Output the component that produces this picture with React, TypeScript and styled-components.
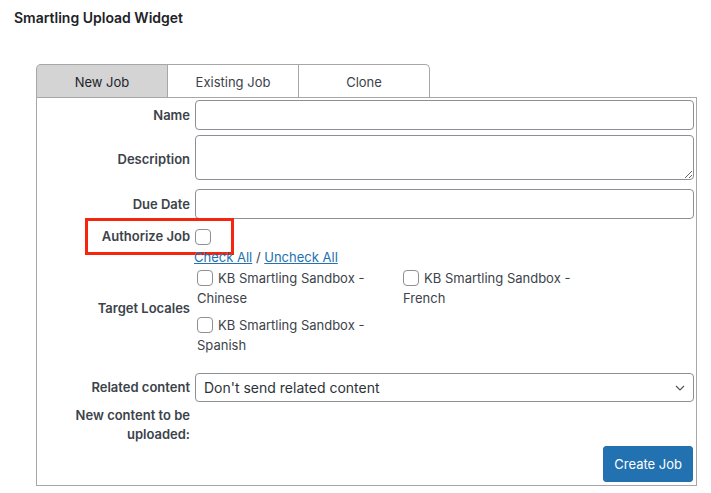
import styled, { createGlobalStyle } from "styled-components";

const GlobalStyle = createGlobalStyle`
   * { box-sizing: border-box; }
   body {
      margin: 0;
      background: #ffffff;
      font-family: Inter, Roboto, "Liberation Sans", sans-serif;
      color: #3c434a;
   }
`;

const locales = [
   "KB Smartling Sandbox - Chinese",
   "KB Smartling Sandbox - French",
   "KB Smartling Sandbox - Spanish",
];

const App = () => {
   return (
      <>
         <GlobalStyle />
         <Page>
            <Heading>Smartling Upload Widget</Heading>
            <Widget>
               <Tabs>
                  <Tab $active>New Job</Tab>
                  <Tab>Existing Job</Tab>
                  <Tab $last>Clone</Tab>
               </Tabs>
               <Panel>
                  <FormRow $top={2}>
                     <Label>Name</Label>
                     <TextInput type="text" />
                  </FormRow>
                  <FormRow $top={5}>
                     <Label $shift={2}>Description</Label>
                     <TextArea />
                  </FormRow>
                  <FormRow $top={9}>
                     <Label>Due Date</Label>
                     <TextInput type="text" />
                  </FormRow>
                  <FormRow $top={8}>
                     <Label>Authorize Job</Label>
                     <Box />
                     <Highlight />
                  </FormRow>
                  <FormRow $top={3}>
                     <span />
                     <Links>
                        <LinkText>Check All</LinkText> / <LinkText>Uncheck All</LinkText>
                     </Links>
                  </FormRow>
                  <FormRow $top={3}>
                     <Label $shift={-3}>Target Locales</Label>
                     <LocaleGrid>
                        {locales.map((name) => (
                           <Locale key={name}>
                              <Box $inline />
                              {name}
                           </Locale>
                        ))}
                     </LocaleGrid>
                  </FormRow>
                  <FormRow $top={18}>
                     <Label>Related content</Label>
                     <Select>
                        <span>Don't send related content</span>
                        <svg width="10" height="6" viewBox="0 0 10 6">
                           <path d="M1 1l4 4 4-4" fill="none" stroke="#50575e" strokeWidth="1.2" />
                        </svg>
                     </Select>
                  </FormRow>
                  <FormRow $top={4}>
                     <Label>New content to be uploaded:</Label>
                     <span />
                  </FormRow>
                  <Actions>
                     <Button>Create Job</Button>
                  </Actions>
               </Panel>
            </Widget>
         </Page>
      </>
   );
};

export default App;

const Page = styled.div`
   padding: 9px 14px 8px;
   width: 711px;
`;

const Heading = styled.div`
   font-size: 14px;
   font-weight: 600;
   color: #1d2327;
   line-height: 18px;
`;

const Widget = styled.div`
   margin-top: 37px;
   margin-left: 22px;
   width: 661px;
`;

const Tabs = styled.div`
   display: flex;
   height: 33px;
`;

const Tab = styled.div<{ $active?: boolean; $last?: boolean }>`
   width: 131px;
   display: flex;
   align-items: center;
   justify-content: center;
   font-size: 13px;
   padding-top: 2px;
   color: ${(p) => (p.$active ? "#1d2327" : "#3c434a")};
   background: ${(p) => (p.$active ? "#d4d4d4" : "#ffffff")};
   border: 1px solid #a7a7a7;
   border-bottom: none;
   border-left-width: ${(p) => (p.$active ? "1px" : "0")};
   border-radius: ${(p) => (p.$active ? "5px 0 0 0" : p.$last ? "0 5px 0 0" : "0")};
   &:first-child {
      width: 132px;
   }
`;

const Panel = styled.div`
   border: 1px solid #a7a7a7;
   padding: 0 2px 3px 0;
`;

const FormRow = styled.div<{ $top: number }>`
   position: relative;
   display: grid;
   grid-template-columns: 153px 1fr;
   column-gap: 5px;
   align-items: center;
   margin-top: ${(p) => p.$top}px;
`;

const Label = styled.div<{ $shift?: number }>`
   text-align: right;
   font-size: 13px;
   font-weight: 600;
   line-height: 19px;
   color: #3c434a;
   padding-left: 30px;
   position: relative;
   top: ${(p) => p.$shift ?? 0}px;
`;

const TextInput = styled.input`
   display: block;
   height: 30px;
   width: 100%;
   border: 1px solid #8c8f94;
   border-radius: 4px;
   background: #fff;
   margin: 0;
`;

const TextArea = styled.textarea`
   display: block;
   height: 45px;
   width: 100%;
   border: 1px solid #8c8f94;
   border-radius: 4px;
   margin: 0;
   resize: vertical;
`;

const Box = styled.span<{ $inline?: boolean }>`
   display: inline-block;
   width: 16px;
   height: 16px;
   border: 1px solid #8c8f94;
   border-radius: 4px;
   background: #fff;
   vertical-align: -3px;
   margin: ${(p) => (p.$inline ? "0 5px 0 0" : "0")};
`;

const Highlight = styled.div`
   position: absolute;
   left: 48px;
   top: -9px;
   width: 149px;
   height: 37px;
   border: 3px solid #f6260e;
   pointer-events: none;
`;

const Links = styled.div`
   font-size: 13px;
   line-height: 16px;
   color: #3c434a;
   margin-left: -1px;
`;

const LinkText = styled.a`
   color: #2271b1;
   text-decoration: underline;
   cursor: pointer;
`;

const LocaleGrid = styled.div`
   display: grid;
   grid-template-columns: 206px 206px;
   row-gap: 7px;
   padding-left: 2px;
`;

const Locale = styled.label`
   font-size: 13px;
   line-height: 20px;
   color: #3c434a;
   width: 180px;
`;

const Select = styled.div`
   height: 29px;
   border: 1px solid #8c8f94;
   border-radius: 4px;
   display: flex;
   align-items: center;
   justify-content: space-between;
   padding: 0 8px 0 8px;
   font-size: 14px;
   color: #2c3338;
`;

const Actions = styled.div`
   display: flex;
   justify-content: flex-end;
   margin-top: 2px;
`;

const Button = styled.button`
   height: 36px;
   padding: 0 10px;
   margin-right: 1px;
   font-family: inherit;
   font-size: 13px;
   color: #fff;
   background: #2271b1;
   border: 1px solid #2271b1;
   border-radius: 3px;
   cursor: pointer;
`;
